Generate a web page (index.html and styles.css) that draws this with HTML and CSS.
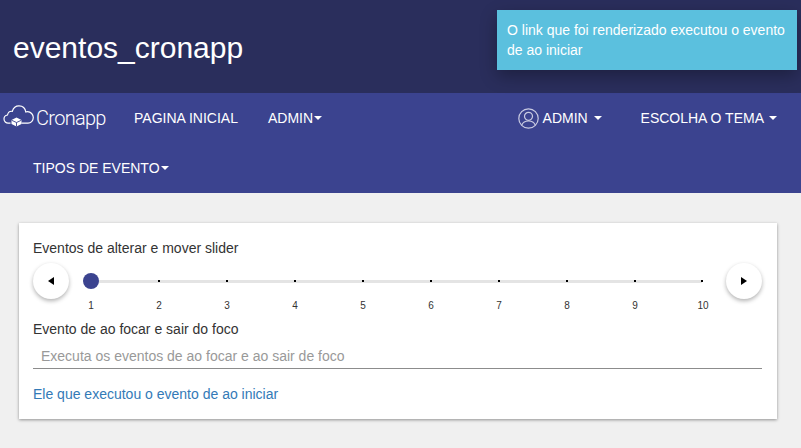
FILE: index.html
```html
<!DOCTYPE html>
<html lang="pt">
<head>
<meta charset="utf-8">
<title>eventos_cronapp</title>
<link rel="stylesheet" href="styles.css">
</head>
<body>
<header class="top"><h1 class="title">eventos_cronapp</h1></header>
<div class="toast">O link que foi renderizado executou o evento de ao iniciar</div>
<nav class="nav">
  <div class="row">
    <a class="brand">
      <svg class="cloud" width="32" height="24" viewBox="0 0 32 24" fill="none" stroke="#fff" stroke-width="1.2">
        <path d="M7.500 18.200H5.200C3 18.200 1 16.400 1 14C1 11.800 2.500 10.300 4.500 10C5 7.500 7 6 9.300 6.300C10.300 3 13 .8 16 .8C19.800 .8 22.300 3.500 22.800 7C23.300 6.800 24 6.700 24.500 6.700C27.800 6.700 30.300 9.500 30.300 12.600C30.300 15.800 27.800 18.200 25 18.200H18.500"/>
        <path d="M13.500 12.500L18.500 15V19L13.500 21.500L8.500 19V15Z" fill="#fff" stroke="none"/>
        <path d="M8.500 15.200L13.500 17.500L18.500 15.200M13.500 17.500V21.500" stroke="#3b438f" stroke-width=".9"/>
      </svg>
      <span class="wordmark">Cronapp</span>
    </a>
    <a class="link home">PAGINA INICIAL</a>
    <a class="link admin">ADMIN<i class="caret tight"></i></a>
    <div class="nav-right">
      <a class="link user">
        <svg class="avatar" width="21" height="21" viewBox="0 0 21 21" fill="none" stroke="#c9cbe2" stroke-width="1.200">
          <circle cx="10.500" cy="10.500" r="9.700"/>
          <circle cx="10.500" cy="8.300" r="4"/>
          <path d="M3.800 17C5 14 7.500 13 10.500 13S16 14 17.200 17"/>
        </svg>
        ADMIN<i class="caret user-caret"></i>
      </a>
      <a class="link theme">ESCOLHA O TEMA<i class="caret theme-caret"></i></a>
    </div>
  </div>
  <div class="row">
    <a class="link types">TIPOS DE EVENTO<i class="caret tight"></i></a>
  </div>
</nav>
<main class="main">
  <section class="card">
    <label class="label">Eventos de alterar e mover slider</label>
    <div class="slider">
      <button class="round"><i class="arrow arrow-prev"></i></button>
      <div class="track">
        <div class="line"></div>
        <div class="thumb"></div>
        <div class="ticks">
          <div class="tick"><i class="dot none"></i><span>1</span></div>
          <div class="tick"><i class="dot"></i><span>2</span></div>
          <div class="tick"><i class="dot"></i><span>3</span></div>
          <div class="tick"><i class="dot"></i><span>4</span></div>
          <div class="tick"><i class="dot"></i><span>5</span></div>
          <div class="tick"><i class="dot"></i><span>6</span></div>
          <div class="tick"><i class="dot"></i><span>7</span></div>
          <div class="tick"><i class="dot"></i><span>8</span></div>
          <div class="tick"><i class="dot"></i><span>9</span></div>
          <div class="tick"><i class="dot"></i><span>10</span></div>
        </div>
      </div>
      <button class="round"><i class="arrow arrow-next"></i></button>
    </div>
    <label class="label">Evento de ao focar e sair do foco</label>
    <input class="field" type="text" placeholder="Executa os eventos de ao focar e ao sair de foco">
    <a class="result">Ele que executou o evento de ao iniciar</a>
  </section>
</main>
</body>
</html>
```
FILE: styles.css
```css
* { box-sizing: border-box; }
html, body { margin: 0; height: 100%; }
body {
  position: relative;
  overflow: hidden;
  background: #f0f0f0;
  font-family: "Liberation Sans", Arial, sans-serif;
  font-size: 14px;
  color: #333;
}
.top {
  height: 93px;
  background: #2a2e5c;
  display: flex;
  align-items: center;
  padding: 2px 0 0 13px;
}
.title {
  margin: 0;
  font-size: 30px;
  font-weight: 400;
  color: #fff;
}
.toast {
  position: absolute;
  left: 497px;
  top: 10px;
  width: 300px;
  height: 60px;
  padding: 10px;
  background: #5bc0de;
  color: #fff;
  line-height: 20px;
  box-shadow: 0 6px 16px rgba(0, 0, 0, .3);
}
.nav { height: 100px; background: #3b438f; color: #fff; }
.row { height: 50px; display: flex; align-items: center; }
.row + .row { padding-left: 33px; }
.brand { display: flex; align-items: center; width: 134px; padding-left: 3px; }
.cloud { display: block; margin-top: -2px; }
.wordmark {
  font-family: Roboto, sans-serif;
  font-weight: 300;
  font-size: 20px;
  letter-spacing: -.7px;
  color: #fff;
  margin-left: 1px;
}
.link { color: #fff; font-size: 14px; display: flex; align-items: center; white-space: nowrap; }
.home { width: 134px; }
.nav-right { margin-left: auto; display: flex; align-items: center; padding-right: 24px; }
.user { width: 123px; }
.avatar { margin-right: 4px; }
.caret {
  width: 0;
  height: 0;
  border-left: 4px solid transparent;
  border-right: 4px solid transparent;
  border-top: 4px solid #fff;
  display: inline-block;
}
.caret.tight { margin-left: 1px; }
.caret.user-caret { margin-left: 6px; }
.caret.theme-caret { margin-left: 5px; }
.main { padding: 30px 24px 0 19px; }
.card {
  height: 196px;
  background: #fff;
  padding: 15px 15px 0 14px;
  box-shadow: 0 1px 3px rgba(0, 0, 0, .4);
  display: flex;
  flex-direction: column;
}
.label { display: block; line-height: 20px; color: #333; }
.slider { display: flex; height: 56px; flex: none; align-items: flex-start; margin-top: 5px; }
.round {
  width: 36px;
  height: 36px;
  margin: 0;
  padding: 0;
  flex: none;
  border: 0;
  border-radius: 50%;
  background: #fff;
  box-shadow: 0 2px 4px rgba(0, 0, 0, .3);
  display: flex;
  align-items: center;
  justify-content: center;
}
.round:last-child { position: relative; z-index: 1; }
.arrow { width: 0; height: 0; border-top: 4px solid transparent; border-bottom: 4px solid transparent; }
.arrow-prev { border-right: 6px solid #000; }
.arrow-next { border-left: 6px solid #000; }
.track { position: relative; flex: 1; height: 56px; min-width: 0; }
.line { position: absolute; left: 22px; top: 17px; width: 611px; height: 3px; background: #e4e4e4; }
.thumb {
  position: absolute;
  left: 14px;
  top: 10px;
  width: 16px;
  height: 16px;
  border-radius: 50%;
  background: #3b438f;
}
.ticks { position: relative; display: grid; margin-left: -12px; grid-template-columns: repeat(10, 68px); }
.tick { height: 56px; position: relative; text-align: center; font-size: 10px; color: #333; }
.tick span { position: absolute; left: 0; right: 0; top: 36px; line-height: 14px; }
.dot { position: absolute; left: 33px; top: 17px; width: 2px; height: 2px; background: #000; }
.tick:last-child .dot { left: 32px; }
.dot.none { display: none; }
.field {
  height: 30px;
  width: 100%;
  flex: none;
  border: 0;
  border-bottom: 1px solid #8c8c8c;
  padding: 7px 8px 3px;
  font: 14px "Liberation Sans", Arial, sans-serif;
  outline: 0;
  background: transparent;
}
.field::placeholder { color: #999; opacity: 1; }
.result { margin-top: 15px; line-height: 20px; color: #337ab7; }
```
